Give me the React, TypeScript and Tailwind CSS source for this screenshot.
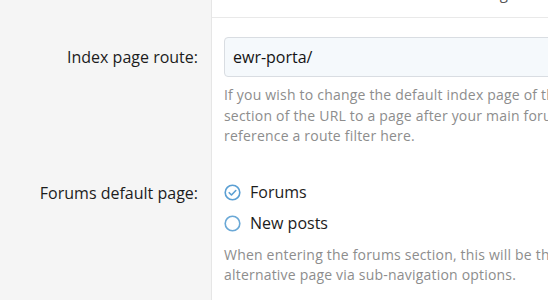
import React from "react";

const font = { fontFamily: '"Open Sans", "Noto Sans", sans-serif' };

function CheckedRadio() {
  return (
    <svg width="17" height="17" viewBox="0 0 17 17" fill="none" className="shrink-0">
      <circle cx="8.5" cy="8.5" r="7.3" stroke="#5b9fd3" strokeWidth="1.6" />
      <path d="M5.2 8.7l2.3 2.3 4.3-4.5" stroke="#5b9fd3" strokeWidth="1.6" strokeLinecap="round" strokeLinejoin="round" />
    </svg>
  );
}

function EmptyRadio() {
  return (
    <svg width="17" height="17" viewBox="0 0 17 17" fill="none" className="shrink-0">
      <circle cx="8.5" cy="8.5" r="7.3" stroke="#6aa8d6" strokeWidth="1.6" />
    </svg>
  );
}

function Row({ label, labelPt, children }: { label?: string; labelPt?: string; children: React.ReactNode }) {
  return (
    <div className="flex">
      <div className={`w-[212px] shrink-0 bg-[#f5f5f5] border-r border-[#e6e6e6] pr-[13px] text-right text-[16px] text-[#1c1c1c] ${labelPt || ""}`}>
        {label}
      </div>
      <div className="flex-1 min-w-0 overflow-hidden pl-[12px]">{children}</div>
    </div>
  );
}

export default function App() {
  return (
    <div className="w-[548px] h-[300px] overflow-hidden bg-white" style={font}>
      <div className="flex h-[18px]">
        <div className="w-[212px] shrink-0 bg-[#f5f5f5] border-r border-[#e6e6e6]" />
        <div className="flex-1 border-b border-[#e9e9e9] overflow-hidden relative">
          <span className="absolute right-[33px] top-[-18px] text-[15px] text-[#555]">Settings</span>
        </div>
      </div>

      <Row label="Index page route:" labelPt="pt-[27px]">
        <div className="pt-[19px] w-[420px]">
          <div className="h-[40px] rounded-[4px] border border-[#d9dde2] bg-[#f5f9fc] pl-[8px] flex items-center text-[16px] text-[#141414]">
            ewr-porta/
          </div>
          <div className="mt-[8px] text-[14px] tracking-[0.2px] leading-[20.5px] text-[#8d8d8d] whitespace-nowrap">
            <div>If you wish to change the default index page of the forum, you can use this option.</div>
            <div>section of the URL to a page after your main forum URL, for example,</div>
            <div>reference a route filter here.</div>
          </div>
        </div>
      </Row>

      <Row label="Forums default page:" labelPt="pt-[34px]">
        <div className="pt-[30px] w-[420px]">
          <div className="flex items-center gap-[9px] h-[31px] text-[16px] text-[#1c1c1c]">
            <CheckedRadio />
            <span>Forums</span>
          </div>
          <div className="flex items-center gap-[9px] h-[31px] text-[16px] text-[#1c1c1c]">
            <EmptyRadio />
            <span>New posts</span>
          </div>
          <div className="mt-[6px] text-[14px] tracking-[0.2px] leading-[20.5px] text-[#8d8d8d] whitespace-nowrap">
            <div>When entering the forums section, this will be the page displayed by default.</div>
            <div>alternative page via sub-navigation options.</div>
          </div>
          <div className="h-[40px]" />
        </div>
      </Row>
    </div>
  );
}
